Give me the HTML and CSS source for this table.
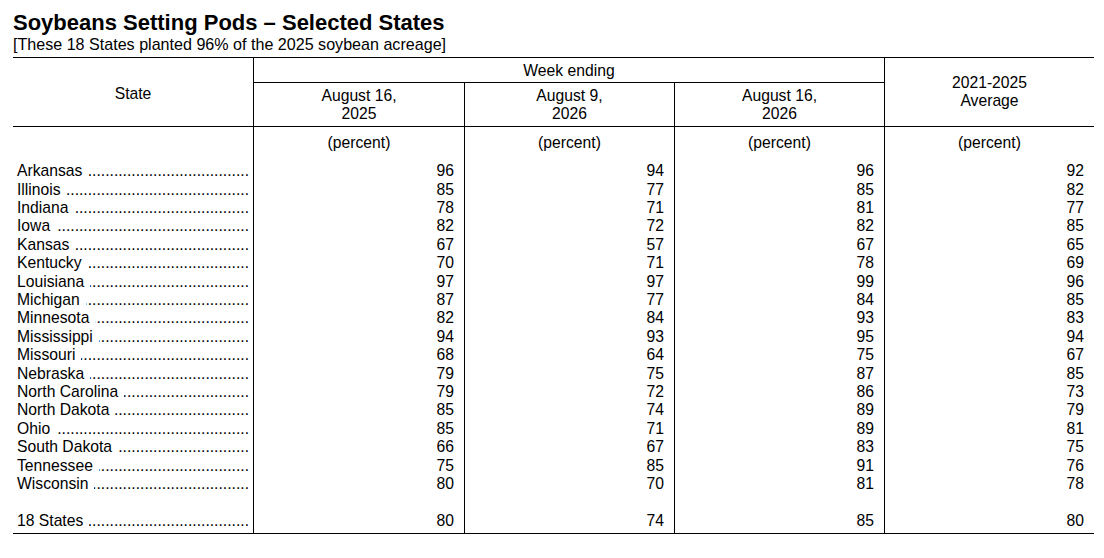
FILE: index.html
```html
<!DOCTYPE html>
<html lang="en">
<head>
<meta charset="utf-8">
<title>Soybeans Setting Pods – Selected States</title>
<link rel="stylesheet" href="styles.css">
</head>
<body>
<div class="page">
  <h1 class="title">Soybeans Setting Pods – Selected States</h1>
  <p class="subtitle">[These 18 States planted 96% of the 2025 soybean acreage]</p>
  <table class="report">
    <colgroup>
      <col class="c-state">
      <col class="c-num1">
      <col class="c-num">
      <col class="c-num">
      <col class="c-num">
    </colgroup>
    <thead>
      <tr>
        <th class="h-state" rowspan="2">State</th>
        <th class="h-week" colspan="3">Week ending</th>
        <th class="h-avg" rowspan="2">2021-2025<br>Average</th>
      </tr>
      <tr>
        <th class="h-date">August 16,<br>2025</th>
        <th class="h-date">August 9,<br>2026</th>
        <th class="h-date">August 16,<br>2026</th>
      </tr>
    </thead>
    <tbody>
      <tr class="unit-row">
        <td class="state"></td>
        <td class="unit">(percent)</td>
        <td class="unit">(percent)</td>
        <td class="unit">(percent)</td>
        <td class="unit">(percent)</td>
      </tr>
      <tr><td class="state"><div class="sline"><span class="name">Arkansas</span><span class="lead">..................................................................</span></div></td><td class="num">96</td><td class="num">94</td><td class="num">96</td><td class="num">92</td></tr>
      <tr><td class="state"><div class="sline"><span class="name">Illinois</span><span class="lead">..................................................................</span></div></td><td class="num">85</td><td class="num">77</td><td class="num">85</td><td class="num">82</td></tr>
      <tr><td class="state"><div class="sline"><span class="name">Indiana</span><span class="lead">..................................................................</span></div></td><td class="num">78</td><td class="num">71</td><td class="num">81</td><td class="num">77</td></tr>
      <tr><td class="state"><div class="sline"><span class="name">Iowa</span><span class="lead">..................................................................</span></div></td><td class="num">82</td><td class="num">72</td><td class="num">82</td><td class="num">85</td></tr>
      <tr><td class="state"><div class="sline"><span class="name">Kansas</span><span class="lead">..................................................................</span></div></td><td class="num">67</td><td class="num">57</td><td class="num">67</td><td class="num">65</td></tr>
      <tr><td class="state"><div class="sline"><span class="name">Kentucky</span><span class="lead">..................................................................</span></div></td><td class="num">70</td><td class="num">71</td><td class="num">78</td><td class="num">69</td></tr>
      <tr><td class="state"><div class="sline"><span class="name">Louisiana</span><span class="lead">..................................................................</span></div></td><td class="num">97</td><td class="num">97</td><td class="num">99</td><td class="num">96</td></tr>
      <tr><td class="state"><div class="sline"><span class="name">Michigan</span><span class="lead">..................................................................</span></div></td><td class="num">87</td><td class="num">77</td><td class="num">84</td><td class="num">85</td></tr>
      <tr><td class="state"><div class="sline"><span class="name">Minnesota</span><span class="lead">..................................................................</span></div></td><td class="num">82</td><td class="num">84</td><td class="num">93</td><td class="num">83</td></tr>
      <tr><td class="state"><div class="sline"><span class="name">Mississippi</span><span class="lead">..................................................................</span></div></td><td class="num">94</td><td class="num">93</td><td class="num">95</td><td class="num">94</td></tr>
      <tr><td class="state"><div class="sline"><span class="name">Missouri</span><span class="lead">..................................................................</span></div></td><td class="num">68</td><td class="num">64</td><td class="num">75</td><td class="num">67</td></tr>
      <tr><td class="state"><div class="sline"><span class="name">Nebraska</span><span class="lead">..................................................................</span></div></td><td class="num">79</td><td class="num">75</td><td class="num">87</td><td class="num">85</td></tr>
      <tr><td class="state"><div class="sline"><span class="name">North Carolina</span><span class="lead">..................................................................</span></div></td><td class="num">79</td><td class="num">72</td><td class="num">86</td><td class="num">73</td></tr>
      <tr><td class="state"><div class="sline"><span class="name">North Dakota</span><span class="lead">..................................................................</span></div></td><td class="num">85</td><td class="num">74</td><td class="num">89</td><td class="num">79</td></tr>
      <tr><td class="state"><div class="sline"><span class="name">Ohio</span><span class="lead">..................................................................</span></div></td><td class="num">85</td><td class="num">71</td><td class="num">89</td><td class="num">81</td></tr>
      <tr><td class="state"><div class="sline"><span class="name">South Dakota</span><span class="lead">..................................................................</span></div></td><td class="num">66</td><td class="num">67</td><td class="num">83</td><td class="num">75</td></tr>
      <tr><td class="state"><div class="sline"><span class="name">Tennessee</span><span class="lead">..................................................................</span></div></td><td class="num">75</td><td class="num">85</td><td class="num">91</td><td class="num">76</td></tr>
      <tr><td class="state"><div class="sline"><span class="name">Wisconsin</span><span class="lead">..................................................................</span></div></td><td class="num">80</td><td class="num">70</td><td class="num">81</td><td class="num">78</td></tr>
      <tr class="blank"><td class="state">&nbsp;</td><td class="num"></td><td class="num"></td><td class="num"></td><td class="num"></td></tr>
      <tr class="total"><td class="state"><div class="sline"><span class="name">18 States</span><span class="lead">..................................................................</span></div></td><td class="num">80</td><td class="num">74</td><td class="num">85</td><td class="num">80</td></tr>
    </tbody>
  </table>
</div>
</body>
</html>
```
FILE: styles.css
```css
html, body {
  margin: 0;
  padding: 0;
  background: #ffffff;
}

body {
  font-family: "Liberation Sans", Arial, Helvetica, sans-serif;
  color: #000000;
  font-size: 15.7px;
  line-height: 18.4px;
}

.page {
  padding: 10px 0 0 13px;
}

.title {
  margin: 0;
  font-size: 22px;
  line-height: 26px;
  font-weight: bold;
}

.subtitle {
  margin: -1px 0 0 0;
  font-size: 16.1px;
  line-height: 18.4px;
}

.report {
  margin-top: 4px;
  width: 1081px;
  table-layout: fixed;
  border-collapse: separate;
  border-spacing: 0;
  border-top: 1px solid #000;
  border-bottom: 1px solid #000;
}

.c-state { width: 240px; }
.c-num1 { width: 211px; }
.c-num { width: 210px; }

.report th {
  font-weight: normal;
  text-align: center;
  padding: 0;
  line-height: 18.4px;
}

.h-state {
  vertical-align: middle;
  border-bottom: 1px solid #000;
  padding-top: 4px !important;
}

.h-week {
  border-left: 1px solid #000;
  border-bottom: 1px solid #000;
  padding: 4px 0 1.5px 0 !important;
}

.h-avg {
  border-left: 1px solid #000;
  border-bottom: 1px solid #000;
  vertical-align: middle;
}

.h-date {
  border-left: 1px solid #000;
  border-bottom: 1px solid #000;
  padding: 3.6px 0 2.7px 0 !important;
}

.report td {
  padding: 0;
  line-height: 18.4px;
  vertical-align: top;
}

.unit-row td {
  padding-top: 6.8px;
  padding-bottom: 9.6px;
}

.unit {
  text-align: center;
  border-left: 1px solid #000;
}

.state {
  padding: 0 4px 0 4px !important;
}

.unit-row .state {
  padding: 0 !important;
}

.sline {
  display: flex;
  white-space: nowrap;
}

.name {
  flex: none;
  margin-right: 6px;
}

.lead {
  flex: 1 1 auto;
  min-width: 0;
  overflow: hidden;
  direction: rtl;
  text-align: right;
}

.num {
  text-align: right;
  border-left: 1px solid #000;
  padding-right: 10px !important;
}

.total td {
  padding-bottom: 2.2px;
}
```
